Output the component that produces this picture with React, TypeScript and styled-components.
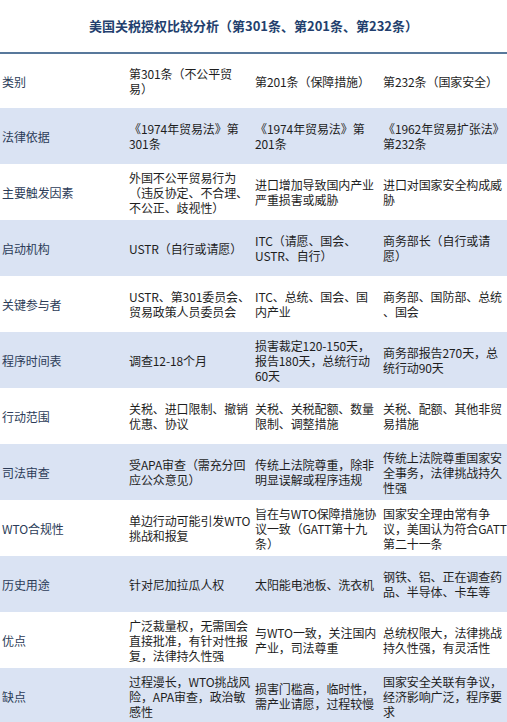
import styled, { createGlobalStyle } from "styled-components";

const GlobalStyle = createGlobalStyle`
  html, body {
    margin: 0;
    padding: 0;
    background: #ffffff;
  }
  body {
    font-family: "Noto Sans CJK SC", "Liberation Sans", sans-serif;
    -webkit-font-smoothing: antialiased;
  }
`;

const Page = styled.div`
  width: 507px;
  overflow: hidden;
`;

const Title = styled.h1`
  margin: 0;
  height: 54px;
  box-sizing: border-box;
  padding-bottom: 2px;
  display: flex;
  align-items: center;
  justify-content: center;
  font-size: 13px;
  font-weight: 700;
  color: #233f6e;
  border-bottom: 2px solid #58789b;
`;

const Row = styled.div<{ $shaded: boolean; $h: number }>`
  display: grid;
  grid-template-columns: 127px 126px 128px 126px;
  height: ${(p) => p.$h}px;
  background: ${(p) => (p.$shaded ? "#dae3f3" : "#ffffff")};
`;

const Cell = styled.div<{ $head?: boolean }>`
  display: flex;
  align-items: center;
  padding-left: 2px;
  font-size: 12px;
  line-height: 15px;
  white-space: pre;
  letter-spacing: -0.1px;
  color: ${(p) => (p.$head ? "#2c3c58" : "#1e1e1e")};
`;

const rows: string[][] = [
  ["类别", "第301条（不公平贸\n易）", "第201条（保障措施）", "第232条（国家安全）"],
  ["法律依据", "《1974年贸易法》第\n301条", "《1974年贸易法》第\n201条", "《1962年贸易扩张法》\n第232条"],
  ["主要触发因素", "外国不公平贸易行为\n（违反协定、不合理、\n不公正、歧视性）", "进口增加导致国内产业\n严重损害或威胁", "进口对国家安全构成威\n胁"],
  ["启动机构", "USTR（自行或请愿）", "ITC（请愿、国会、\nUSTR、自行）", "商务部长（自行或请\n愿）"],
  ["关键参与者", "USTR、第301委员会、\n贸易政策人员委员会", "ITC、总统、国会、国\n内产业", "商务部、国防部、总统\n、国会"],
  ["程序时间表", "调查12-18个月", "损害裁定120-150天，\n报告180天，总统行动\n60天", "商务部报告270天，总\n统行动90天"],
  ["行动范围", "关税、进口限制、撤销\n优惠、协议", "关税、关税配额、数量\n限制、调整措施", "关税、配额、其他非贸\n易措施"],
  ["司法审查", "受APA审查（需充分回\n应公众意见）", "传统上法院尊重，除非\n明显误解或程序违规", "传统上法院尊重国家安\n全事务，法律挑战持久\n性强"],
  ["WTO合规性", "单边行动可能引发WTO\n挑战和报复", "旨在与WTO保障措施协\n议一致（GATT第十九\n条）", "国家安全理由常有争\n议，美国认为符合GATT\n第二十一条"],
  ["历史用途", "针对尼加拉瓜人权", "太阳能电池板、洗衣机", "钢铁、铝、正在调查药\n品、半导体、卡车等"],
  ["优点", "广泛裁量权，无需国会\n直接批准，有针对性报\n复，法律持久性强", "与WTO一致，关注国内\n产业，司法尊重", "总统权限大，法律挑战\n持久性强，有灵活性"],
  ["缺点", "过程漫长，WTO挑战风\n险，APA审查，政治敏\n感性", "损害门槛高，临时性，\n需产业请愿，过程较慢", "国家安全关联有争议，\n经济影响广泛，程序要\n求"],
];

const App = () => {
  return (
    <Page>
      <GlobalStyle />
      <Title>美国关税授权比较分析（第301条、第201条、第232条）</Title>
      {rows.map((r, i) => (
        <Row key={r[0]} $shaded={i % 2 === 1} $h={i === 0 ? 54 : 56}>
          {r.map((c, j) => (
            <Cell key={j} $head={j === 0}>
              {c}
            </Cell>
          ))}
        </Row>
      ))}
    </Page>
  );
};

export default App;
